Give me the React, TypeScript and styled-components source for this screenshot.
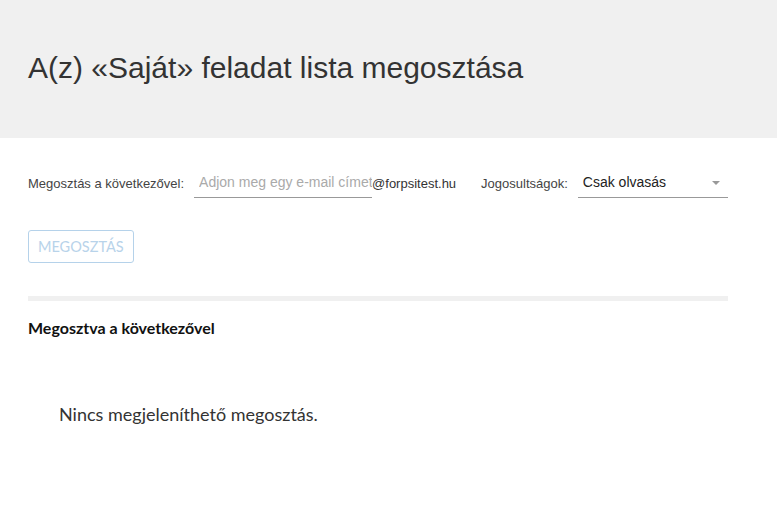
import styled, { createGlobalStyle } from 'styled-components';

const GlobalStyle = createGlobalStyle`
  html, body { margin: 0; padding: 0; background: #fff; }
  body { font-family: "Liberation Sans", Arial, sans-serif; color: #333; }
  * { box-sizing: border-box; }
`;

const ScHeader = styled.div`
  height: 138px;
  background: #f0f0f0;
  display: flex;
  align-items: center;
  padding: 0 28px 2px;
`;

const ScTitle = styled.h1`
  margin: 0;
  font-family: "Liberation Sans", Arial, sans-serif;
  font-weight: normal;
  font-size: 30px;
  color: #333;
`;

const ScBody = styled.div`
  padding: 30px 0 0 28px;
  width: 700px;
  box-sizing: content-box;
`;

const ScForm = styled.div`
  display: flex;
  align-items: flex-end;
  height: 30px;
  white-space: nowrap;
`;

const ScLabel = styled.span`
  flex-shrink: 0;
  font-size: 13px;
  color: #444;
  padding-bottom: 7px;
  margin-right: ${p => p.gap || 0}px;
`;

const ScInput = styled.input`
  flex-shrink: 0;
  width: 178px;
  height: 28px;
  border: none;
  border-bottom: 1px solid #999;
  outline: none;
  padding: 0 0 4px 5px;
  font-family: "Liberation Sans", Arial, sans-serif;
  font-size: 14px;
  color: #333;
  &::placeholder { color: #aaa; }
`;

const ScSuffix = styled.span`
  flex-shrink: 0;
  font-size: 13px;
  color: #333;
  padding-bottom: 7px;
  margin-right: 25px;
`;

const ScSelect = styled.div`
  flex-shrink: 0;
  width: 150px;
  height: 28px;
  border-bottom: 1px solid #999;
  display: flex;
  align-items: center;
  justify-content: space-between;
  padding: 0 8px 4px 5px;
  font-size: 14px;
  color: #222;
`;

const ScCaret = styled.span`
  width: 0;
  height: 0;
  border-left: 4px solid transparent;
  border-right: 4px solid transparent;
  border-top: 4px solid #999;
  margin-top: 2px;
`;

const ScButton = styled.button`
  margin-top: 32px;
  height: 33px;
  padding: 0 9px;
  background: #fff;
  border: 1px solid #b5d2ea;
  border-radius: 3px;
  font-family: Lato, "Open Sans", sans-serif;
  font-size: 14.5px;
  color: #b8d3ea;
`;

const ScDivider = styled.div`
  margin-top: 33px;
  height: 5px;
  background: #f0f0f0;
`;

const ScSubtitle = styled.h2`
  margin: 17px 0 0;
  font-family: Lato, "Open Sans", sans-serif;
  font-weight: bold;
  font-size: 16px;
  color: #111;
`;

const ScEmpty = styled.p`
  margin: 66px 0 0 31px;
  font-family: Lato, "Open Sans", sans-serif;
  font-size: 18px;
  color: #333;
`;

function App() {
  return (
    <>
      <GlobalStyle />
      <ScHeader>
        <ScTitle>{'A(z) «Saját» feladat lista megosztása'}</ScTitle>
      </ScHeader>
      <ScBody>
        <ScForm>
          <ScLabel gap={10}>{'Megosztás a következővel:'}</ScLabel>
          <ScInput placeholder="Adjon meg egy e-mail címet" />
          <ScSuffix>{'@forpsitest.hu'}</ScSuffix>
          <ScLabel gap={10}>{'Jogosultságok:'}</ScLabel>
          <ScSelect>
            <span>{'Csak olvasás'}</span>
            <ScCaret />
          </ScSelect>
        </ScForm>
        <ScButton>{'MEGOSZTÁS'}</ScButton>
        <ScDivider />
        <ScSubtitle>{'Megosztva a következővel'}</ScSubtitle>
        <ScEmpty>{'Nincs megjeleníthető megosztás.'}</ScEmpty>
      </ScBody>
    </>
  );
}

export default App;
